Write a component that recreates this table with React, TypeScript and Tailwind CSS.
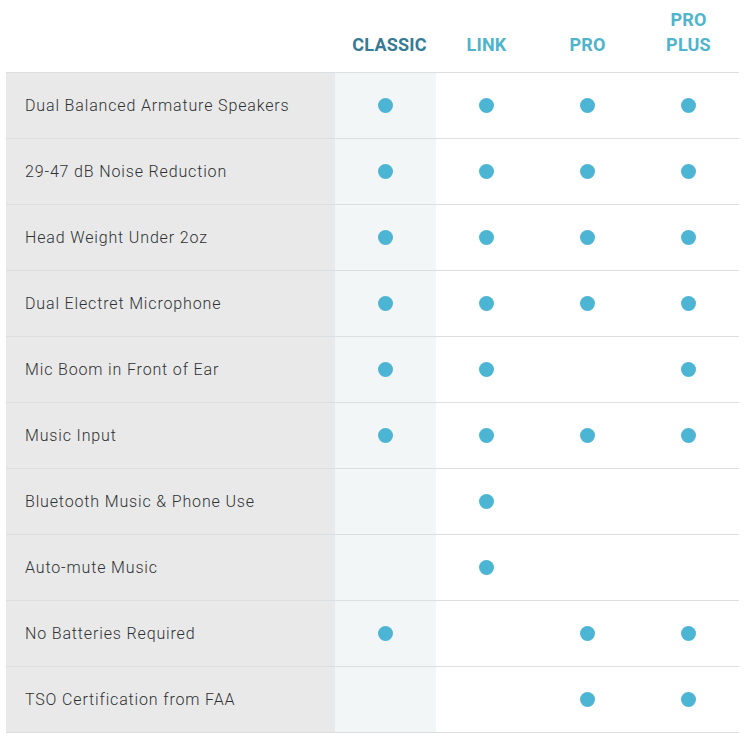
import React from "react";

const rows: [string, boolean[]][] = [
  ["Dual Balanced Armature Speakers", [true, true, true, true]],
  ["29-47 dB Noise Reduction", [true, true, true, true]],
  ["Head Weight Under 2oz", [true, true, true, true]],
  ["Dual Electret Microphone", [true, true, true, true]],
  ["Mic Boom in Front of Ear", [true, true, false, true]],
  ["Music Input", [true, true, true, true]],
  ["Bluetooth Music & Phone Use", [false, true, false, false]],
  ["Auto-mute Music", [false, true, false, false]],
  ["No Batteries Required", [true, false, true, true]],
  ["TSO Certification from FAA", [false, false, true, true]],
];

function Dot() {
  return <span className="block w-[15px] h-[15px] rounded-full bg-[#4db5d4]" />;
}

export default function App() {
  return (
    <div className="bg-white w-[747px] h-[737px] pl-[6px] pr-[8px]">
      <div className="flex h-[73px] border-b border-[#dcdedf] font-['Roboto',sans-serif] font-bold text-[18px] leading-[25px] tracking-[0.2px]">
        <div className="w-[329px]" />
        <div className="w-[101px] flex items-end justify-center pb-[15px] text-[#377a96] pl-[8px]">CLASSIC</div>
        <div className="w-[101px] flex items-end justify-center pb-[15px] text-[#4fb4cc]">LINK</div>
        <div className="w-[101px] flex items-end justify-center pb-[15px] text-[#4fb4cc]">PRO</div>
        <div className="w-[101px] flex items-end justify-center pb-[15px] text-[#4fb4cc] text-center">
          PRO
          <br />
          PLUS
        </div>
      </div>
      {rows.map(([label, vals]) => (
        <div key={label} className="flex h-[66px] border-b border-[#dcdedf]">
          <div className="w-[329px] bg-[#e9e9e9] flex items-center pl-[19px] text-[16px] text-[#2f3234] tracking-[0.85px] font-light font-['Roboto',sans-serif]">
            {label}
          </div>
          {vals.map((v, i) => (
            <div
              key={i}
              className={`w-[101px] flex items-center justify-center ${i === 0 ? "bg-[#f3f6f7]" : "bg-white"}`}
            >
              {v && <Dot />}
            </div>
          ))}
        </div>
      ))}
    </div>
  );
}
